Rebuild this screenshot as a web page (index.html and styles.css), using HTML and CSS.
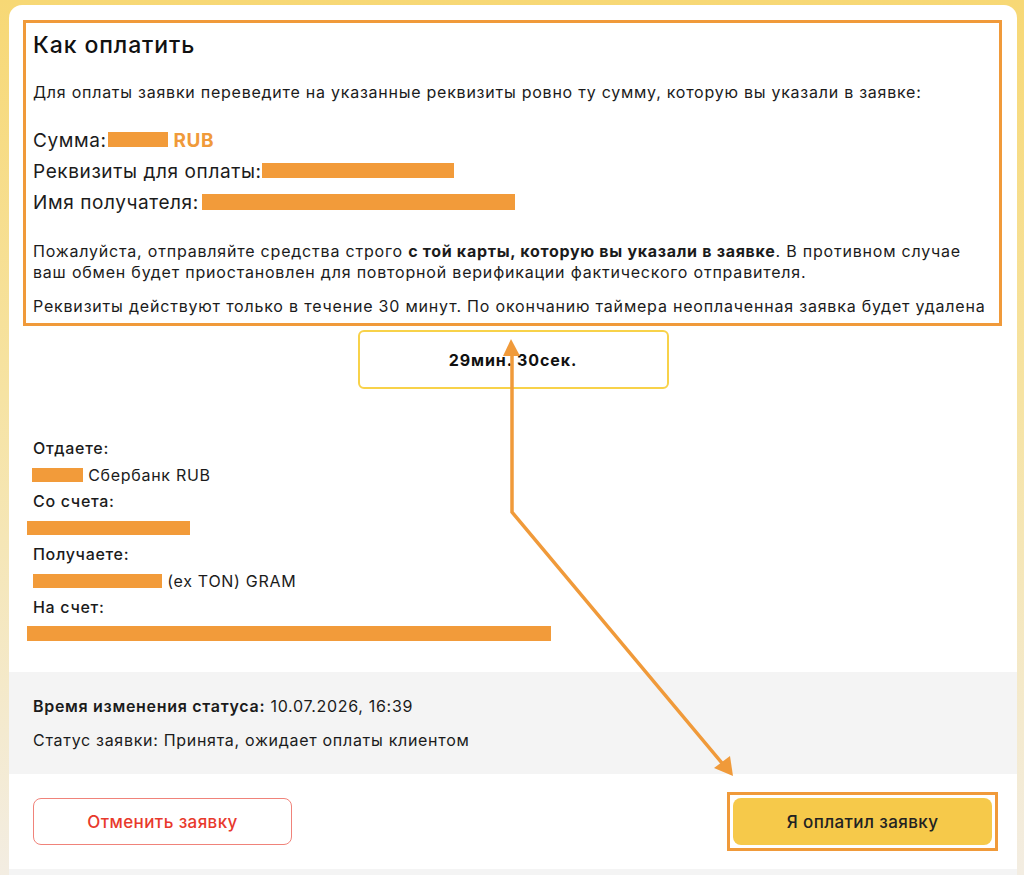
FILE: index.html
```html
<!DOCTYPE html>
<html lang="ru">
<head>
<meta charset="utf-8">
<title>Как оплатить</title>
<link rel="stylesheet" href="styles.css">
</head>
<body>
<div class="page">
  <div class="card">
    <section class="howto">
      <h1 class="title">Как оплатить</h1>
      <p class="intro">Для оплаты заявки переведите на указанные реквизиты ровно ту сумму, которую вы указали в заявке:</p>
      <div class="pay-lines">
        <div class="pay-line">Сумма:<span class="redact r-sum"></span> <span class="cur">RUB</span></div>
        <div class="pay-line">Реквизиты для оплаты:<span class="redact r-req"></span></div>
        <div class="pay-line">Имя получателя:<span class="redact r-name"></span></div>
      </div>
      <p class="note">Пожалуйста, отправляйте средства строго <b>с той карты, которую вы указали в заявке</b>. В противном случае<br>ваш обмен будет приостановлен для повторной верификации фактического отправителя.</p>
      <p class="note note-last">Реквизиты действуют только в течение 30 минут. По окончанию таймера неоплаченная заявка будет удалена</p>
    </section>

    <div class="timer">29мин. 30сек.</div>

    <div class="details">
      <div class="label">Отдаете:</div>
      <div class="value"><span class="redact r-give"></span> Сбербанк RUB</div>
      <div class="label">Со счета:</div>
      <div class="value"><span class="redact r-from"></span></div>
      <div class="label">Получаете:</div>
      <div class="value"><span class="redact r-get"></span> (ex TON) GRAM</div>
      <div class="label">На счет:</div>
      <div class="value"><span class="redact r-to"></span></div>
    </div>

    <div class="status">
      <div class="status-line"><b>Время изменения статуса:</b> 10.07.2026, 16:39</div>
      <div class="status-line">Статус заявки: Принята, ожидает оплаты клиентом</div>
    </div>

    <div class="actions">
      <button class="btn btn-cancel">Отменить заявку</button>
      <span class="highlight"><button class="btn btn-paid">Я оплатил заявку</button></span>
    </div>
    <div class="after"></div>
  </div>
</div>

<svg class="arrows" width="1024" height="875" viewBox="0 0 1024 875">
  <polyline points="512,356 512,512 722,763" fill="none" stroke="#f09a3a" stroke-width="3.5" stroke-linejoin="miter"/>
  <polygon points="511,339 503,356 520,356" fill="#f09a3a"/>
  <polygon points="733,776 714,768 730,756" fill="#f09a3a"/>
</svg>
</body>
</html>
```

FILE: styles.css
```css
* { box-sizing: border-box; }

html, body {
  margin: 0;
  padding: 0;
}

body {
  position: relative;
  width: 1024px;
  height: 875px;
  overflow: hidden;
  font-family: Inter, "Open Sans", "Liberation Sans", sans-serif;
  color: #1b1b1b;
  background: linear-gradient(to bottom, #f7d875 0%, #f6e3a3 45%, #f3ede2 100%);
}

.page {
  padding: 5px 7px 0 9px;
}

.card {
  background: #fff;
  border-radius: 13px 13px 0 0;
  padding-top: 15px;
  min-height: 900px;
}

.howto {
  margin: 0 15px 0 14px;
  border: 3px solid #f09a3a;
  padding: 7px 4px 6px 7px;
}

.title {
  margin: 0;
  font-size: 23px;
  line-height: 30px;
  font-weight: 500;
  letter-spacing: 0.9px;
  color: #111;
}

.intro {
  margin: 22px 0 0;
  font-size: 16px;
  line-height: 21px;
  letter-spacing: 0.75px;
}

.pay-lines {
  margin-top: 22px;
}

.pay-line {
  font-size: 19px;
  line-height: 31px;
  letter-spacing: 0.6px;
  color: #1b1b1b;
}

.cur {
  color: #f09a3a;
  font-weight: 700;
}

.redact {
  display: inline-block;
  background: #f29b3a;
  vertical-align: middle;
}

.r-sum { width: 60px; height: 15px; margin-top: -4px; margin-left: 1px; }
.r-req { width: 192px; height: 15px; margin-top: -4px; }
.r-name { width: 313px; height: 16px; margin-top: -4px; margin-left: 3px; }

.note {
  margin: 23px 0 0;
  font-size: 16px;
  line-height: 21px;
  letter-spacing: 0.8px;
  white-space: nowrap;
}

.note b { font-weight: 700; letter-spacing: 0.7px; }

.note-last {
  margin-top: 13px;
}

.timer {
  width: 311px;
  height: 59px;
  margin: 4px auto 0;
  border: 2px solid #f8d24a;
  border-radius: 6px;
  display: flex;
  align-items: center;
  justify-content: center;
  font-size: 16px;
  font-weight: 700;
  letter-spacing: 0.9px;
  color: #111;
}

.details {
  margin-top: 46px;
  padding: 0 24px;
  font-size: 16px;
  line-height: 26.5px;
  letter-spacing: 0.7px;
}

.label {
  font-weight: 500;
}

.r-give { width: 51px; height: 14px; margin-top: -3px; margin-left: -1px; }
.r-from { width: 163px; height: 14px; margin-left: -6px; margin-top: -3px; }
.r-get { width: 129px; height: 14px; margin-top: -3px; }
.r-to { width: 524px; height: 15px; margin-left: -6px; margin-top: -3px; }

.status {
  margin-top: 25px;
  background: #f4f4f4;
  padding: 24px 24px 24px;
  font-size: 16px;
  line-height: 20px;
  letter-spacing: 0.7px;
}

.status-line + .status-line {
  margin-top: 14px;
}

.status-line b {
  font-weight: 600;
}

.actions {
  display: flex;
  justify-content: space-between;
  align-items: center;
  padding: 24px 19px 18px 24px;
}

.btn {
  display: block;
  width: 259px;
  height: 47px;
  border-radius: 8px;
  font-family: inherit;
  font-size: 17px;
  font-weight: 500;
  letter-spacing: 0.4px;
  cursor: pointer;
}

.btn-cancel {
  margin-top: -6px;
  background: #fff;
  border: 1px solid #f0837a;
  color: #e8392c;
}

.highlight {
  display: block;
  margin-top: -6px;
  border: 3px solid #f09a3a;
  padding: 3px;
}

.btn-paid {
  background: #f6c94a;
  border: none;
  color: #222;
}

.after {
  height: 40px;
  background: #f4f4f4;
}

.arrows {
  position: absolute;
  left: 0;
  top: 0;
  pointer-events: none;
}
```
